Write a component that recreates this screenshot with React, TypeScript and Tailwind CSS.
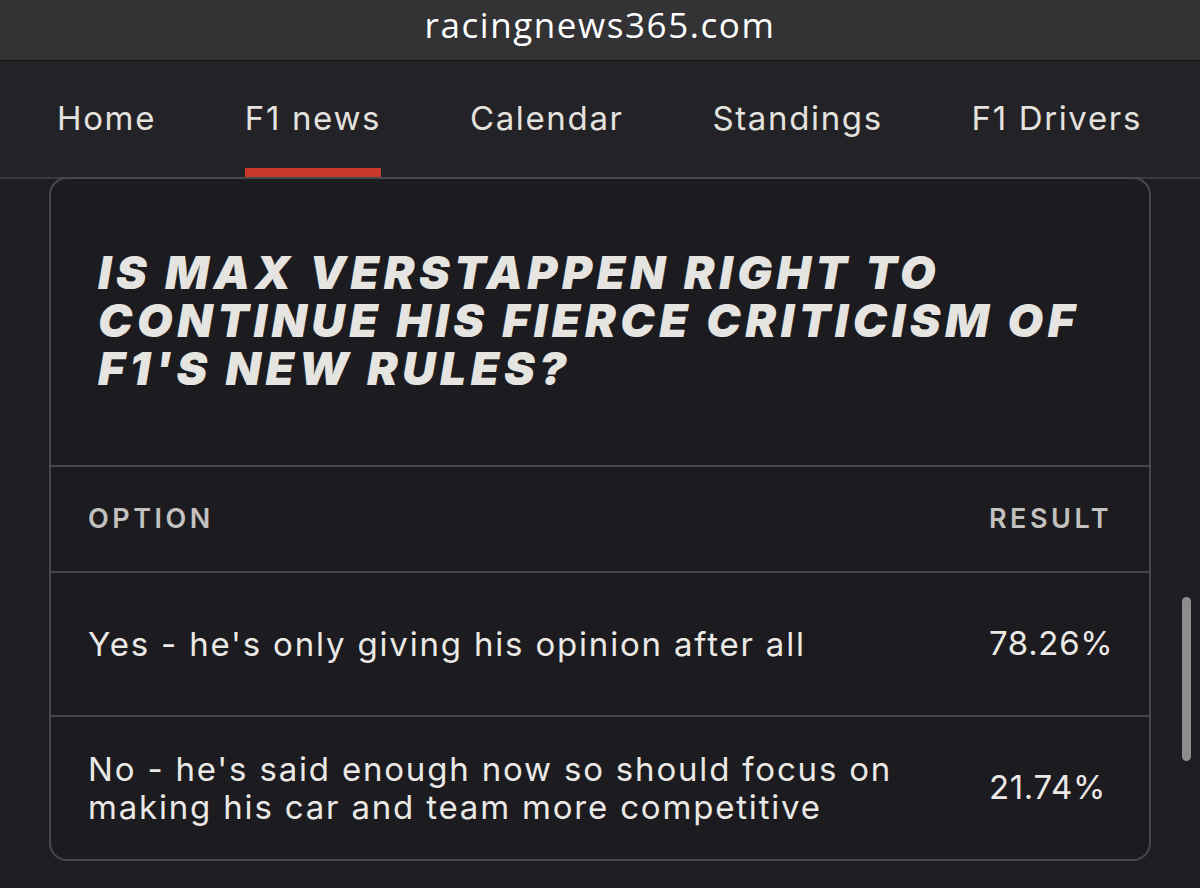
import React from "react";

const navItems = ["Home", "F1 news", "Calendar", "Standings", "F1 Drivers"];

const results = [
  { option: "Yes - he's only giving his opinion after all", result: "78.26%" },
  { option: "No - he's said enough now so should focus on making his car and team more competitive", result: "21.74%" },
];

export default function App() {
  return (
    <div className="relative w-[1200px] h-[888px] overflow-hidden bg-[#1e1e22] text-[#e8e6e3] font-['Inter',sans-serif]">
      {/* address bar */}
      <div className="h-[60px] bg-[#333336] flex items-center justify-center pb-[11px]">
        <span className="text-[35px] leading-[48px] tracking-[0.045em] text-white font-['Open_Sans',sans-serif]">racingnews365.com</span>
      </div>
      <div className="h-[1px] bg-[#0f0f10]" />

      {/* nav */}
      <nav className="h-[118px] bg-[#232327] border-b-2 border-[#3c3c40] flex justify-between pl-[57px] pr-[58px]">
        {navItems.map((item) => (
          <div key={item} className="flex flex-col">
            <div className="flex-1 flex items-center pt-[8px] text-[33px] tracking-[0.05em] text-[#e4e2df]">{item}</div>
            <div className={`h-[9px] ${item === "F1 news" ? "bg-[#c9392c]" : "bg-transparent"}`} />
          </div>
        ))}
      </nav>

      {/* poll card */}
      <div className="mx-[49px] -mt-[2px] border-2 border-[#48484c] rounded-[18px] bg-[#1c1c20]">
        <div className="h-[286px] pl-[47px] pr-[30px] pt-[69px]">
          <h1 className="italic font-black uppercase text-[46px] leading-[48px] tracking-[0.1em] text-[#e6e4e0]">
            Is Max Verstappen right to continue his fierce criticism of F1's new rules?
          </h1>
        </div>

        <div className="border-t-2 border-[#48484c] h-[106px] flex items-center pl-[37px] pr-[40px]">
          <div className="flex-1 text-[27px] font-semibold tracking-[0.13em] text-[#c2c1bf]">OPTION</div>
          <div className="w-[120px] text-[27px] font-semibold tracking-[0.13em] text-[#c2c1bf]">RESULT</div>
        </div>

        {results.map((r) => (
          <div key={r.result} className="border-t-2 border-[#48484c] h-[144px] flex items-center pl-[37px] pr-[40px]">
            <div className="flex-1 pr-[60px] text-[33px] leading-[38px] tracking-[0.055em] text-[#ebe9e6]">{r.option}</div>
            <div className="w-[120px] text-[33px] tracking-[0.02em] text-[#ebe9e6]">{r.result}</div>
          </div>
        ))}
      </div>

      {/* scrollbar */}
      <div className="absolute left-[1182px] top-[597px] w-[9px] h-[164px] rounded-full bg-[#8d8d90]" />
    </div>
  );
}
